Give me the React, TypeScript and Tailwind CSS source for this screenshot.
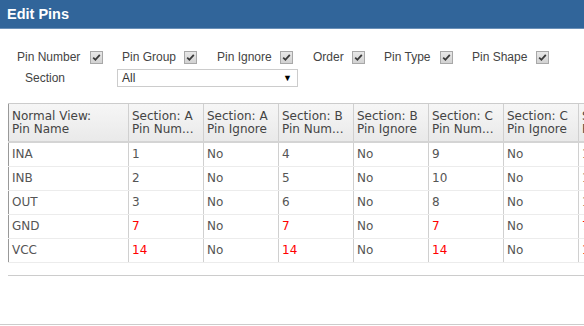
import React from "react";

function Check() {
  return (
    <span className="inline-flex shrink-0 w-[13px] h-[13px] border border-[#a8a8a8] bg-gradient-to-b from-[#e8e8e8] to-[#d2d2d2] items-center justify-center">
      <svg width="9" height="9" viewBox="0 0 9 9">
        <path d="M1.2 4.6 L3.4 6.8 L7.8 1.8" stroke="#3a3a3a" strokeWidth="1.8" fill="none" />
      </svg>
    </span>
  );
}

const opts = [
  { label: "Pin Number", w: "w-[86px]", mr: "mr-[19px]" },
  { label: "Pin Group", w: "w-[75px]", mr: "mr-[20px]" },
  { label: "Pin Ignore", w: "w-[76px]", mr: "mr-[20px]" },
  { label: "Order", w: "w-[52px]", mr: "mr-[19px]" },
  { label: "Pin Type", w: "w-[69px]", mr: "mr-[19px]" },
  { label: "Pin Shape", w: "w-[77px]", mr: "mr-[0px]" },
];

const headers = [
  ["Normal View:", "Pin Name"],
  ["Section: A", "Pin Num..."],
  ["Section: A", "Pin Ignore"],
  ["Section: B", "Pin Num..."],
  ["Section: B", "Pin Ignore"],
  ["Section: C", "Pin Num..."],
  ["Section: C", "Pin Ignore"],
  ["Section: D", "Pin Num..."],
];

const rows: { v: string[]; red?: boolean }[] = [
  { v: ["INA", "1", "No", "4", "No", "9", "No", "11"] },
  { v: ["INB", "2", "No", "5", "No", "10", "No", "12"] },
  { v: ["OUT", "3", "No", "6", "No", "8", "No", "13"] },
  { v: ["GND", "7", "No", "7", "No", "7", "No", "7"], red: true },
  { v: ["VCC", "14", "No", "14", "No", "14", "No", "14"], red: true },
];

const widths = [120, 75, 75, 75, 75, 75, 75, 75];

export default function App() {
  return (
    <div className="w-[584px] h-[326px] bg-white overflow-hidden relative" style={{ fontFamily: '"Liberation Sans", Arial, sans-serif' }}>
      <div className="h-[29px] bg-[#31659a] border-b border-[#6a90b8] flex items-center pl-[7px]">
        <span className="text-white font-bold text-[14.5px] leading-none">Edit Pins</span>
      </div>
      <div className="pt-[21px] pl-[17px] text-[12px] text-[#444]">
        <div className="flex items-center h-[14px]">
          {opts.map((o, i) => (
            <div key={i} className={`flex items-center shrink-0 ${o.w} ${o.mr}`}>
              <span className="flex-1 leading-none whitespace-nowrap">{o.label}</span>
              <Check />
            </div>
          ))}
        </div>
        <div className="flex items-center mt-[5px] h-[18px]">
          <span className="pl-[8px] w-[100px] leading-none whitespace-nowrap">Section</span>
          <div className="w-[181px] h-[18px] border border-[#cccccc] flex items-center justify-between pl-[4px] pr-[5px] text-[#333]">
            <span className="leading-none">All</span>
            <span className="text-[9px] leading-none text-black">▼</span>
          </div>
        </div>
      </div>
      <div className="ml-[8px] mt-[16px] h-[173px] border-t border-b border-[#cccccc] overflow-hidden" style={{ fontFamily: '"DejaVu Sans", Verdana, sans-serif' }}>
        <table className="border-collapse table-fixed text-[12px] text-[#555]" style={{ width: widths.reduce((a, b) => a + b, 0) }}>
          <colgroup>
            {widths.map((w, i) => (
              <col key={i} style={{ width: w }} />
            ))}
          </colgroup>
          <thead>
            <tr className="h-[38px] bg-gradient-to-b from-[#f6f6f6] to-[#e9e9e9]">
              {headers.map((h, i) => (
                <th key={i} className={`font-normal text-left align-middle pl-[3px] leading-[13px] border-b-2 border-b-[#d4d4d4] border-r border-r-[#d0d0d0] ${i === 0 ? "border-l border-l-[#999]" : ""}`}>
                  <div className="whitespace-nowrap overflow-hidden text-[#444]">{h[0]}</div>
                  <div className="whitespace-nowrap overflow-hidden text-[#444]">{h[1]}</div>
                </th>
              ))}
            </tr>
          </thead>
          <tbody>
            {rows.map((r, ri) => (
              <tr key={ri} className="h-[24px]">
                {r.v.map((c, ci) => (
                  <td key={ci} className={`pl-[3px] whitespace-nowrap overflow-hidden border-b border-b-[#ececec] border-r border-r-[#d0d0d0] ${ci === 0 ? "border-l border-l-[#999]" : ""} ${r.red && ci % 2 === 1 ? "text-[#ff0000]" : ""}`}>
                    {c}
                  </td>
                ))}
              </tr>
            ))}
          </tbody>
        </table>
      </div>
      <div className="mt-[48px] border-t border-[#cccccc]" />
    </div>
  );
}
